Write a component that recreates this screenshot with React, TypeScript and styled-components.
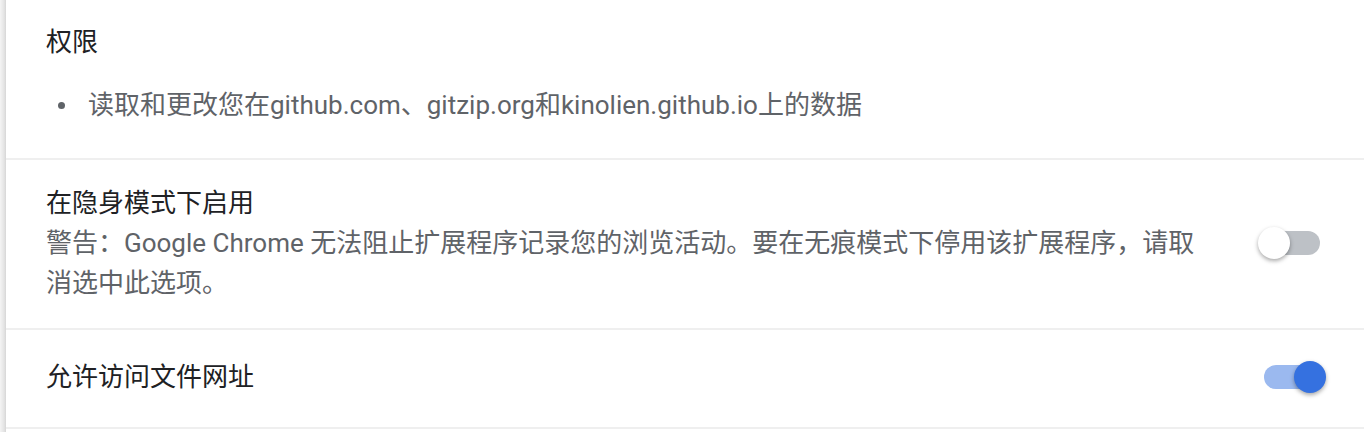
import React from "react";
import styled, { createGlobalStyle } from "styled-components";

const GlobalStyle = createGlobalStyle`
  html, body {
    margin: 0;
    padding: 0;
    background: #ffffff;
  }
  body {
    font-family: Roboto, "Noto Sans CJK SC", "Noto Sans", sans-serif;
    -webkit-font-smoothing: antialiased;
  }
`;

const Page = styled.div`
  display: flex;
  min-height: 432px;
  padding-left: 6px;
  background: linear-gradient(to right, #f4f4f4 0px, #e4e4e4 4px, #d6d6d6 6px);
`;

const Card = styled.div`
  flex: 1;
  background: #ffffff;
  display: flex;
  flex-direction: column;
`;

const Row = styled.div<{ $pt: number; $pb: number }>`
  display: flex;
  align-items: center;
  gap: 24px;
  padding: ${(p) => p.$pt}px 44px ${(p) => p.$pb}px 40px;
  border-bottom: 2px solid #efefef;
`;

const TextCol = styled.div`
  flex: 1;
  min-width: 0;
  display: flex;
  flex-direction: column;
`;

const Title = styled.div`
  font-size: 26px;
  line-height: 40px;
  color: #202124;
`;

const Secondary = styled.div`
  font-size: 26px;
  line-height: 40px;
  color: #5f6368;
  max-width: 1162px;
`;

const List = styled.ul`
  list-style: none;
  margin: 23px 0 0 0;
  padding: 0;
`;

const Item = styled.li`
  display: flex;
  align-items: center;
  font-size: 26px;
  line-height: 40px;
  color: #5f6368;
`;

const Dot = styled.span`
  width: 7px;
  height: 7px;
  border-radius: 50%;
  background: #5f6368;
  margin: 0 23px 0 12px;
  flex: none;
`;

const ToggleWrap = styled.div`
  position: relative;
  width: 56px;
  height: 24px;
  flex: none;
`;

const Bar = styled.div<{ $on: boolean }>`
  width: 56px;
  height: 24px;
  border-radius: 12px;
  background: ${(p) => (p.$on ? "#9bb9ef" : "#bdc1c6")};
`;

const Knob = styled.div<{ $on: boolean }>`
  position: absolute;
  top: -4px;
  left: ${(p) => (p.$on ? "30px" : "-6px")};
  width: 32px;
  height: 32px;
  border-radius: 50%;
  background: ${(p) => (p.$on ? "#3571e0" : "#ffffff")};
  box-shadow: 0 2px 4px rgba(0, 0, 0, 0.35);
`;

const Toggle = ({ on }: { on: boolean }) => (
  <ToggleWrap>
    <Bar $on={on} />
    <Knob $on={on} />
  </ToggleWrap>
);

export default function App() {
  return (
    <>
      <GlobalStyle />
      <Page>
        <Card>
          <Row $pt={22} $pb={33}>
            <TextCol>
              <Title>权限</Title>
              <List>
                <Item>
                  <Dot />
                  读取和更改您在github.com、gitzip.org和kinolien.github.io上的数据
                </Item>
              </List>
            </TextCol>
          </Row>
          <Row $pt={23} $pb={25}>
            <TextCol>
              <Title>在隐身模式下启用</Title>
              <Secondary>
                警告：Google Chrome 无法阻止扩展程序记录您的浏览活动。要在无痕模式下停用该扩展程序，请取消选中此选项。
              </Secondary>
            </TextCol>
            <Toggle on={false} />
          </Row>
          <Row $pt={27} $pb={30}>
            <TextCol>
              <Title>允许访问文件网址</Title>
            </TextCol>
            <Toggle on={true} />
          </Row>
        </Card>
      </Page>
    </>
  );
}
